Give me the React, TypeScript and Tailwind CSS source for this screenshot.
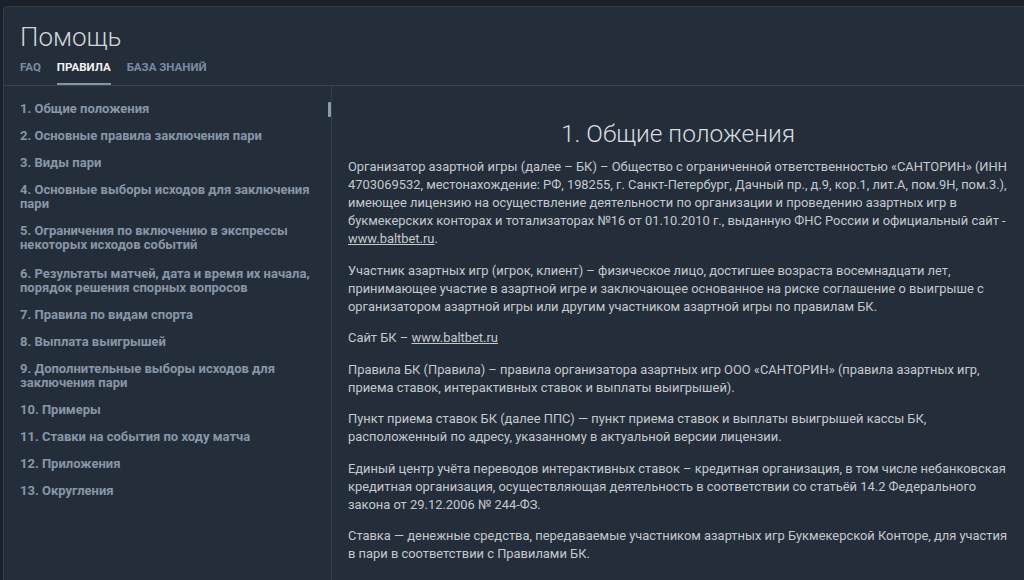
import React from "react";

const items: string[] = [
  "1. Общие положения",
  "2. Основные правила заключения пари",
  "3. Виды пари",
  "4. Основные выборы исходов для заключения пари",
  "5. Ограничения по включению в экспрессы некоторых исходов событий",
  "6. Результаты матчей, дата и время их начала, порядок решения спорных вопросов",
  "7. Правила по видам спорта",
  "8. Выплата выигрышей",
  "9. Дополнительные выборы исходов для заключения пари",
  "10. Примеры",
  "11. Ставки на события по ходу матча",
  "12. Приложения",
  "13. Округления",
];

export default function App() {
  return (
    <div
      className="h-[580px] w-[1024px] overflow-hidden bg-[#1c222b] pt-[6px] pl-[3px]"
      style={{ fontFamily: "Roboto, 'Noto Sans', Arial, sans-serif" }}
    >
      <div className="flex h-full flex-col rounded-tl-[5px] border-t border-l border-[#343e4b] bg-[#242e3a]">
        <div className="border-b border-[#38434f] px-[16px]">
          <h1 className="pt-[14px] text-[26px] font-light leading-[32px] text-[#d2d5d9]">Помощь</h1>
          <div className="mt-[8px] flex gap-[16px] text-[11.5px] font-bold uppercase leading-[13px]">
            <span className="pb-[11px] text-[#7a8ca2]">FAQ</span>
            <span className="border-b-2 border-[#8696a8] pb-[9px] text-[#f2f3f5]">Правила</span>
            <span className="pb-[11px] text-[#7a8ca2]">База знаний</span>
          </div>
        </div>
        <div className="flex min-h-0 flex-1">
          <div className="relative w-[328px] shrink-0 border-r border-[#344050] pl-[16px] pr-[20px] pt-[16px]">
            <div className="absolute right-[0px] top-[16px] h-[15px] w-[3px] rounded-[1px] bg-[#8c9bad]" />
            <ul className="flex flex-col gap-[13px]">
              {items.map((t, i) => (
                <li
                  key={t}
                  className={`text-[13px] font-bold leading-[14px] text-[#8896a8] ${i === 5 ? "mt-[2px]" : ""}`}
                >
                  {t}
                </li>
              ))}
            </ul>
          </div>
          <div className="min-w-0 flex-1 pl-[16px] pr-[8px] pt-[33px] text-[12.9px] leading-[18px] text-[#c4c9cf]">
            <h2 className="mb-[9px] mr-[8px] text-center text-[24.5px] font-light leading-[30px] text-[#d9dcdf]">
              1. Общие положения
            </h2>
            <p className="mb-[13.5px]">
              Организатор азартной игры (далее – БК) – Общество с ограниченной ответственностью «САНТОРИН» (ИНН
              4703069532, местонахождение: РФ, 198255, г. Санкт-Петербург, Дачный пр., д.9, кор.1, лит.А, пом.9Н, пом.3.),
              имеющее лицензию на осуществление деятельности по организации и проведению азартных игр в букмекерских
              конторах и тотализаторах №16 от 01.10.2010 г., выданную ФНС России и официальный сайт -{" "}
              <span className="underline">www.baltbet.ru</span>.
            </p>
            <p className="mb-[13.5px]">
              Участник азартных игр (игрок, клиент) – физическое лицо, достигшее возраста восемнадцати лет, принимающее
              участие в азартной игре и заключающее основанное на риске соглашение о выигрыше с организатором азартной
              игры или другим участником азартной игры по правилам БК.
            </p>
            <p className="mb-[13.5px]">
              Сайт БК – <span className="underline">www.baltbet.ru</span>
            </p>
            <p className="mb-[13.5px]">
              Правила БК (Правила) – правила организатора азартных игр ООО «САНТОРИН» (правила азартных игр, приема
              ставок, интерактивных ставок и выплаты выигрышей).
            </p>
            <p className="mb-[13.5px]">
              Пункт приема ставок БК (далее ППС) — пункт приема ставок и выплаты выигрышей кассы БК, расположенный по
              адресу, указанному в актуальной версии лицензии.
            </p>
            <p className="mb-[13.5px]">
              Единый центр учёта переводов интерактивных ставок – кредитная организация, в том числе небанковская
              кредитная организация, осуществляющая деятельность в соответствии со статьёй 14.2 Федерального закона от
              29.12.2006 № 244-ФЗ.
            </p>
            <p className="mb-[13.5px]">
              Ставка — денежные средства, передаваемые участником азартных игр Букмекерской Конторе, для участия в пари
              в соответствии с Правилами БК.
            </p>
            <p className="mb-[13.5px]">
              Интерактивная ставка — ставка, принимаемая через сайт БК в информационно-телекоммуникационной сети
              «Интернет».
            </p>
          </div>
        </div>
      </div>
    </div>
  );
}
